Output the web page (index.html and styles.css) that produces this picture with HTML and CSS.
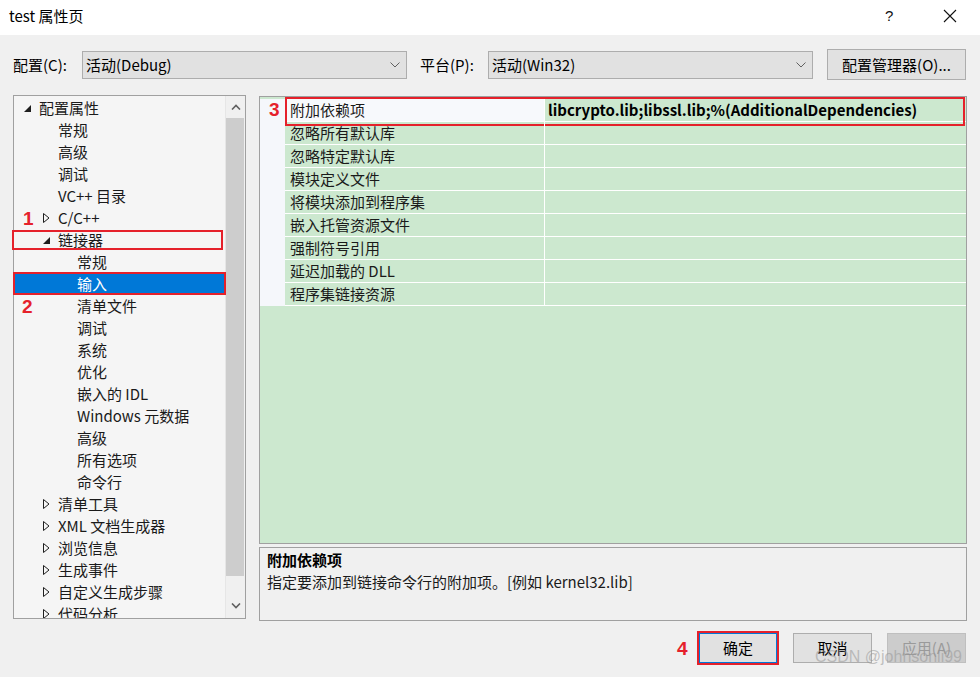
FILE: index.html
```html
<!DOCTYPE html>
<html lang="zh-CN">
<head>
<meta charset="utf-8">
<title>test 属性页</title>
<link rel="stylesheet" href="styles.css">
</head>
<body>
<div class="window">
  <div class="titlebar">
    <span class="title">test 属性页</span>
    <span class="help">?</span>
    <span class="close"><svg width="14" height="14" viewBox="0 0 14 14"><path d="M1 1 L13 13 M13 1 L1 13" stroke="#111" stroke-width="1.1" fill="none"/></svg></span>
  </div>

  <div class="config-row">
    <span class="lbl lbl-config">配置(C):</span>
    <div class="combo">
      <span class="combo-text">活动(Debug)</span>
      <svg class="chev" width="10" height="6" viewBox="0 0 10 6"><path d="M0.5 0.5 L5 5 L9.5 0.5" stroke="#606060" stroke-width="1" fill="none"/></svg>
    </div>
    <span class="lbl lbl-platform">平台(P):</span>
    <div class="combo">
      <span class="combo-text">活动(Win32)</span>
      <svg class="chev" width="10" height="6" viewBox="0 0 10 6"><path d="M0.5 0.5 L5 5 L9.5 0.5" stroke="#606060" stroke-width="1" fill="none"/></svg>
    </div>
    <button class="btn btn-manager">配置管理器(O)...</button>
  </div>

  <div class="content">
    <div class="tree">
      <div class="tree-list">
        <div class="trow l1"><span class="tog"><svg width="9" height="9" viewBox="0 0 9 9"><path d="M8 1 L8 8 L1 8 Z" fill="#1e1e1e"/></svg></span><span>配置属性</span></div>
        <div class="trow l2"><span class="tog"></span><span>常规</span></div>
        <div class="trow l2"><span class="tog"></span><span>高级</span></div>
        <div class="trow l2"><span class="tog"></span><span>调试</span></div>
        <div class="trow l2"><span class="tog"></span><span>VC++ 目录</span></div>
        <div class="trow l2"><span class="badge badge-1">1</span><span class="tog"><svg width="9" height="12" viewBox="0 0 9 12"><path d="M1.5 1.5 L7 6 L1.5 10.5 Z" fill="none" stroke="#1e1e1e" stroke-width="1"/></svg></span><span>C/C++</span></div>
        <div class="trow l2 mark-linker"><span class="tog"><svg width="9" height="9" viewBox="0 0 9 9"><path d="M8 1 L8 8 L1 8 Z" fill="#1e1e1e"/></svg></span><span>链接器</span></div>
        <div class="trow l3"><span class="tog"></span><span>常规</span></div>
        <div class="trow l3 selected"><span class="tog"></span><span>输入</span></div>
        <div class="trow l3"><span class="badge badge-2">2</span><span class="tog"></span><span>清单文件</span></div>
        <div class="trow l3"><span class="tog"></span><span>调试</span></div>
        <div class="trow l3"><span class="tog"></span><span>系统</span></div>
        <div class="trow l3"><span class="tog"></span><span>优化</span></div>
        <div class="trow l3"><span class="tog"></span><span>嵌入的 IDL</span></div>
        <div class="trow l3"><span class="tog"></span><span>Windows 元数据</span></div>
        <div class="trow l3"><span class="tog"></span><span>高级</span></div>
        <div class="trow l3"><span class="tog"></span><span>所有选项</span></div>
        <div class="trow l3"><span class="tog"></span><span>命令行</span></div>
        <div class="trow l2"><span class="tog"><svg width="9" height="12" viewBox="0 0 9 12"><path d="M1.5 1.5 L7 6 L1.5 10.5 Z" fill="none" stroke="#1e1e1e" stroke-width="1"/></svg></span><span>清单工具</span></div>
        <div class="trow l2"><span class="tog"><svg width="9" height="12" viewBox="0 0 9 12"><path d="M1.5 1.5 L7 6 L1.5 10.5 Z" fill="none" stroke="#1e1e1e" stroke-width="1"/></svg></span><span>XML 文档生成器</span></div>
        <div class="trow l2"><span class="tog"><svg width="9" height="12" viewBox="0 0 9 12"><path d="M1.5 1.5 L7 6 L1.5 10.5 Z" fill="none" stroke="#1e1e1e" stroke-width="1"/></svg></span><span>浏览信息</span></div>
        <div class="trow l2"><span class="tog"><svg width="9" height="12" viewBox="0 0 9 12"><path d="M1.5 1.5 L7 6 L1.5 10.5 Z" fill="none" stroke="#1e1e1e" stroke-width="1"/></svg></span><span>生成事件</span></div>
        <div class="trow l2"><span class="tog"><svg width="9" height="12" viewBox="0 0 9 12"><path d="M1.5 1.5 L7 6 L1.5 10.5 Z" fill="none" stroke="#1e1e1e" stroke-width="1"/></svg></span><span>自定义生成步骤</span></div>
        <div class="trow l2"><span class="tog"><svg width="9" height="12" viewBox="0 0 9 12"><path d="M1.5 1.5 L7 6 L1.5 10.5 Z" fill="none" stroke="#1e1e1e" stroke-width="1"/></svg></span><span>代码分析</span></div>
      </div>
      <div class="vscroll">
        <div class="sbtn"><svg width="10" height="6" viewBox="0 0 10 6"><path d="M1 5.5 L5 1.5 L9 5.5" stroke="#606060" stroke-width="1.6" fill="none"/></svg></div>
        <div class="thumb"></div>
        <div class="track"></div>
        <div class="sbtn sbtn-down"><svg width="10" height="6" viewBox="0 0 10 6"><path d="M1 0.5 L5 4.5 L9 0.5" stroke="#606060" stroke-width="1.6" fill="none"/></svg></div>
      </div>
    </div>

    <div class="right">
      <div class="grid">
        <div class="prow sel"><span class="pmargin"><span class="badge badge-3">3</span></span><span class="pname">附加依赖项</span><span class="pval">libcrypto.lib;libssl.lib;%(AdditionalDependencies)</span></div>
        <div class="prow"><span class="pmargin"></span><span class="pname">忽略所有默认库</span><span class="pval"></span></div>
        <div class="prow"><span class="pmargin"></span><span class="pname">忽略特定默认库</span><span class="pval"></span></div>
        <div class="prow"><span class="pmargin"></span><span class="pname">模块定义文件</span><span class="pval"></span></div>
        <div class="prow"><span class="pmargin"></span><span class="pname">将模块添加到程序集</span><span class="pval"></span></div>
        <div class="prow"><span class="pmargin"></span><span class="pname">嵌入托管资源文件</span><span class="pval"></span></div>
        <div class="prow"><span class="pmargin"></span><span class="pname">强制符号引用</span><span class="pval"></span></div>
        <div class="prow"><span class="pmargin"></span><span class="pname">延迟加载的 DLL</span><span class="pval"></span></div>
        <div class="prow"><span class="pmargin"></span><span class="pname">程序集链接资源</span><span class="pval"></span></div>
      </div>
      <div class="desc">
        <div class="desc-title">附加依赖项</div>
        <div class="desc-text">指定要添加到链接命令行的附加项。[例如 kernel32.lib]</div>
      </div>
    </div>
  </div>

  <div class="buttons">
    <div class="ok-wrap"><span class="badge badge-4">4</span><button class="btn btn-ok">确定</button></div>
    <button class="btn btn-cancel">取消</button>
    <button class="btn btn-apply" disabled>应用(A)</button>
  </div>

  <div class="watermark">CSDN @johnsonli99</div>
</div>
</body>
</html>
```

FILE: styles.css
```css
* { box-sizing: border-box; }

html, body {
  margin: 0;
  padding: 0;
}

body {
  width: 980px;
  height: 677px;
  overflow: hidden;
  background: #f0f0f0;
  font-family: "Noto Sans CJK SC", "Open Sans", sans-serif;
  font-size: 15px;
  color: #000;
}

.window {
  position: relative;
  width: 980px;
  height: 677px;
  background: #f0f0f0;
}

/* title bar */
.titlebar {
  height: 35px;
  background: #fff;
  display: flex;
  align-items: center;
  padding-left: 9px;
}

.title {
  flex: 1;
  font-size: 15px;
  line-height: 20px;
  margin-top: -3px;
}

.help {
  width: 12px;
  font-family: "Liberation Sans", sans-serif;
  font-size: 15px;
  color: #111;
  margin-right: 46px;
  margin-top: -4px;
}

.close {
  display: flex;
  width: 14px;
  height: 14px;
  margin-right: 23px;
  margin-top: -4px;
}

/* config row */
.config-row {
  display: flex;
  align-items: center;
  height: 31px;
  margin-top: 14px;
  padding-left: 13px;
}

.lbl {
  line-height: 20px;
}

.lbl-config { width: 69px; }
.lbl-platform { width: 68px; margin-left: 13px; }

.combo {
  width: 325px;
  height: 28px;
  background: #e1e1e1;
  border: 1px solid #adadad;
  display: flex;
  align-items: center;
  padding-left: 3px;
  padding-right: 6px;
}

.combo-text {
  flex: 1;
  line-height: 20px;
}

.chev { margin-top: 1px; }

.btn {
  font-family: "Noto Sans CJK SC", "Open Sans", sans-serif;
  font-size: 15px;
  color: #000;
  background: #e1e1e1;
  border: 1px solid #adadad;
  padding: 0;
  line-height: 20px;
}

.btn-manager {
  width: 139px;
  height: 31px;
  margin-left: 14px;
}

/* content */
.content {
  display: flex;
  margin-top: 15px;
  padding-left: 13px;
}

.tree {
  width: 233px;
  height: 524px;
  border: 1px solid #a0a0a0;
  display: flex;
  background: #f5f5f5;
}

.tree-list {
  flex: 1;
  min-height: 0;
  padding-top: 1px;
  clip-path: inset(0 -6px 0 -6px);
  position: relative;
}

.trow {
  position: relative;
  display: flex;
  align-items: center;
  height: 22px;
  line-height: 22px;
  white-space: nowrap;
  color: #1a1a1a;
}

.trow.l1 { padding-left: 8px; }
.trow.l2 { padding-left: 27px; }
.trow.l3 { padding-left: 46px; }

.tog {
  width: 17px;
  height: 22px;
  display: flex;
  align-items: center;
  padding-left: 1px;
}

.trow.selected {
  background: #0078d7;
  color: #fff;
}

.trow.selected::after {
  content: "";
  position: absolute;
  left: -1px;
  right: -1px;
  top: -1px;
  bottom: 0;
  border: 2px solid #e5212b;
}

.mark-linker::after {
  content: "";
  position: absolute;
  left: -2px;
  right: 2px;
  top: 1px;
  bottom: 1px;
  border: 2px solid #e5212b;
}

.badge {
  position: absolute;
  font-family: "Liberation Sans", sans-serif;
  font-weight: bold;
  font-size: 19px;
  line-height: 20px;
  color: #e5212b;
}

.badge-1 { left: 9px; top: 2px; }
.badge-2 { left: 8px; top: 2px; }
.badge-3 { left: 9px; top: 1px; }
.badge-4 { left: -22px; top: 6px; }

.vscroll {
  width: 20px;
  display: flex;
  flex-direction: column;
  background: #f0f0f0;
  border-left: 1px solid #e6e6e6;
}

.sbtn {
  height: 22px;
  display: flex;
  align-items: center;
  justify-content: center;
}

.thumb {
  height: 458px;
  background: #cdcdcd;
  margin: 0 1px 0 0;
}

.track { flex: 1; }

.sbtn-down { height: 22px; margin-bottom: 1px; }

/* right column */
.right {
  width: 708px;
  margin-left: 13px;
  margin-top: 1px;
  display: flex;
  flex-direction: column;
}

.grid {
  height: 448px;
  border: 1px solid #a0a0a0;
  background: #cce8cf;
  padding-top: 2px;
}

.prow {
  position: relative;
  display: flex;
  height: 23px;
}

.pmargin {
  position: relative;
  width: 25px;
  background: #f5f7fb;
}

.pname {
  width: 260px;
  padding-left: 5px;
  line-height: 22px;
  border-right: 1px solid #fff;
  border-bottom: 1px solid #fff;
  color: #1a1a1a;
  white-space: nowrap;
}

.pval {
  flex: 1;
  padding-left: 3px;
  line-height: 22px;
  border-bottom: 1px solid #fff;
  font-weight: bold;
  white-space: nowrap;
}

.prow.sel .pname { background: #f7f9fc; }

.prow.sel::after {
  content: "";
  position: absolute;
  left: 25px;
  right: 1px;
  top: -2px;
  height: 25px;
  border: 2px solid #e5212b;
}

.desc {
  margin-top: 3px;
  height: 74px;
  border: 1px solid #a0a0a0;
  background: #f0f0f0;
  padding: 1px 7px 0;
}

.desc-title {
  font-weight: bold;
  line-height: 22px;
}

.desc-text {
  line-height: 22px;
  color: #1a1a1a;
}

/* buttons */
.buttons {
  display: flex;
  justify-content: flex-end;
  align-items: center;
  margin-top: 12px;
  padding-right: 14px;
  gap: 15px;
}

.ok-wrap {
  position: relative;
  display: flex;
  margin-right: 1px;
}

.btn-ok, .btn-cancel, .btn-apply {
  height: 30px;
  width: 79px;
}

.btn-ok {
  width: 78px;
  border: 1px solid #0078d7;
  outline: 2px solid #e5212b;
  outline-offset: 0;
}

.btn-apply {
  background: #cccccc;
  border-color: #bfbfbf;
  color: #9a9a9a;
}

.watermark {
  position: absolute;
  left: 815px;
  top: 648px;
  font-family: "Liberation Sans", sans-serif;
  font-size: 16px;
  color: rgba(150, 150, 150, 0.55);
  white-space: nowrap;
}
```
